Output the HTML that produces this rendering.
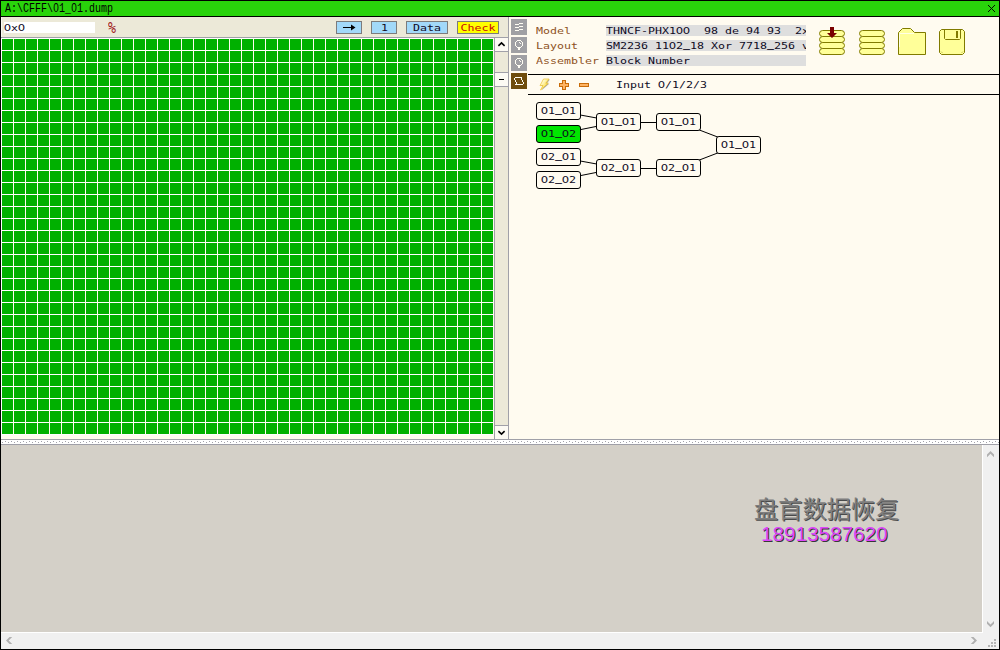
<!DOCTYPE html>
<html><head><meta charset="utf-8"><title>dump</title>
<style>
html,body{margin:0;padding:0;width:1000px;height:650px;overflow:hidden;background:#000;}
#w{position:absolute;left:0;top:0;width:1000px;height:650px;background:#000;overflow:hidden;font-family:"Liberation Mono","DejaVu Sans Mono",monospace;}
#w div,#w svg{position:absolute;}
.m{font-family:"DejaVu Sans Mono","Liberation Mono",monospace;font-size:11.63px;line-height:14px;white-space:pre;color:#0e0a1e;height:14px;transform:scaleY(0.80);transform-origin:0 11px;}
.m i{font-style:normal;display:inline-block;width:7px;text-indent:-0.2px;font-family:"DejaVu Sans","Liberation Sans",sans-serif;}
.g{background:#a0a0a8;}
.btn{border:1px solid #7c7c7c;box-sizing:border-box;height:13px;top:21px;background:#a2d9f9;}
.sb{width:16px;height:16px;left:511px;background:#a0a0a4;}
.fld{left:606px;width:200px;height:11px;background:#dedede;clip-path:inset(-3px 0 -4px 0);}
.n{width:45px;height:18px;box-sizing:border-box;border:1px solid #000;border-radius:3px;background:#fffbf0;}
.n .m{left:4px;top:0;}
#ttl i{font-style:normal;display:inline-block;width:7.2px;text-indent:0.25px;font-family:"Liberation Sans",sans-serif;}
.m b{font-weight:bold;position:relative;top:-1px;}
</style></head><body>
<div id="w">
<!-- title -->
<div style="left:1px;top:1px;width:998px;height:15px;background:#29d30b;"></div>
<div id="ttl" style="left:5px;top:2px;height:13px;font-family:'Liberation Mono',monospace;font-size:12px;line-height:13px;white-space:pre;color:#000;transform-origin:0 50%;transform:scaleX(0.8333);">A:\CFFF\<i>0</i>1_<i>0</i>1.dump</div>
<svg style="left:987px;top:4px" width="9" height="9" viewBox="0 0 9 9"><path d="M1 1L8 8M8 1L1 8" stroke="#000" stroke-width="0.95" fill="none"/></svg>
<!-- left toolbar -->
<div style="left:1px;top:17px;width:507px;height:20px;background:#ece9d8;"></div>
<div style="left:1px;top:17px;width:1px;height:20px;background:#fbfaf4;"></div>
<div style="left:4px;top:22px;width:91px;height:11px;background:#fff;"></div>
<div class="m" style="left:4px;top:20px;"><i>0</i>x<i>0</i></div>
<div class="m" style="left:108px;top:22.4px;color:#a01c1c;font-size:13.3px;transform-origin:0 11.6px;transform:scaleY(1.22);">%</div>
<div class="btn" style="left:336px;width:26px;"></div>
<svg style="left:336px;top:21px" width="26" height="13" viewBox="0 0 26 13"><path d="M7 6.5H18" stroke="#000" stroke-width="1"/><path d="M15 3.5L19.5 6.5L15 9.5Z" fill="#000"/></svg>
<div class="btn" style="left:371px;width:26px;"></div>
<div class="m" style="left:381px;top:20px;">1</div>
<div class="btn" style="left:406px;width:42px;"></div>
<div class="m" style="left:413px;top:20px;">Data</div>
<div class="btn" style="left:457px;width:42px;background:#ffff00;"></div>
<div class="m" style="left:460.5px;top:20px;color:#c80808;">Check</div>
<div class="g" style="left:1px;top:37px;width:508px;height:1px;"></div>
<!-- grid -->
<div style="left:1px;top:38px;width:493px;height:401px;background:#fffbf0;"></div>
<div style="left:1px;top:38px;width:493px;height:397px;background:linear-gradient(90deg,#fffbf0 1px,transparent 1px) 0 0/12px 12px,linear-gradient(180deg,#fff 1px,transparent 1px) 0 0/12px 12px,#00b000;"></div>
<div style="left:1px;top:38px;width:1px;height:401px;background:#fff;"></div>
<!-- v scroll of grid -->
<div style="left:495px;top:38px;width:13px;height:401px;background:#ece9d8;"></div>
<div class="g" style="left:494px;top:37px;width:1px;height:402px;"></div>
<div class="g" style="left:508px;top:17px;width:1px;height:422px;"></div>
<div style="left:495px;top:38px;width:13px;height:13px;background:#fcfaf3;"></div>
<div class="g" style="left:495px;top:51px;width:13px;height:1px;"></div>
<svg style="left:495px;top:38px" width="13" height="13" viewBox="0 0 13 13"><path d="M3.4 7.8L6.5 4.9L9.6 7.8" stroke="#000" stroke-width="1.6" fill="none"/></svg>
<div class="g" style="left:495px;top:72px;width:13px;height:1px;"></div>
<div style="left:495px;top:73px;width:13px;height:13px;background:#fcfaf3;"></div>
<div class="g" style="left:495px;top:86px;width:13px;height:1px;"></div>
<div style="left:499px;top:78.7px;width:5px;height:1.6px;background:#000;"></div>
<div class="g" style="left:495px;top:425px;width:13px;height:1px;"></div>
<div style="left:495px;top:426px;width:13px;height:13px;background:#fcfaf3;"></div>
<svg style="left:495px;top:426px" width="13" height="13" viewBox="0 0 13 13"><path d="M3.4 5.2L6.5 8.1L9.6 5.2" stroke="#000" stroke-width="1.6" fill="none"/></svg>
<!-- right panel -->
<div style="left:509px;top:17px;width:490px;height:422px;background:#fffbf0;"></div>
<div class="sb" style="top:19px;"></div>
<div class="sb" style="top:37px;"></div>
<div class="sb" style="top:55px;"></div>
<div class="sb" style="top:73px;background:#6e4c0c;"></div>
<svg style="left:511px;top:19px" width="16" height="16" viewBox="0 0 16 16" shape-rendering="crispEdges"><path d="M4 5h4v1h-4zM4 8h4v1h-4zM4 11h4v1h-4zM8 4h4v1h-4zM8 7h4v1h-4zM8 10h4v1h-4z" fill="#fffdf4"/></svg>
<svg style="left:511px;top:37px" width="16" height="16" viewBox="0 0 16 16" shape-rendering="crispEdges"><path d="M6 3h4v1h-4zM5 4h1v1h-1zM10 4h1v1h-1zM4 5h1v4h-1zM11 5h1v4h-1zM5 9h1v1h-1zM10 9h1v1h-1zM6 10h4v1h-4zM7 11h2v2h-2zM8 5h1v1h-1zM9 6h1v1h-1z" fill="#fffdf4"/></svg>
<svg style="left:511px;top:55px" width="16" height="16" viewBox="0 0 16 16" shape-rendering="crispEdges"><path d="M6 3h4v1h-4zM5 4h1v1h-1zM10 4h1v1h-1zM4 5h1v4h-1zM11 5h1v4h-1zM5 9h1v1h-1zM10 9h1v1h-1zM6 10h4v1h-4zM7 11h2v2h-2zM8 5h1v1h-1zM9 6h1v1h-1z" fill="#fffdf4"/></svg>
<svg style="left:511px;top:73px" width="16" height="16" viewBox="0 0 16 16" shape-rendering="crispEdges"><path d="M4 4h7v1h-7zM3 5h1v2h-1zM10 5h1v2h-1zM4 7h1v2h-1zM11 7h1v2h-1zM5 9h1v2h-1zM12 9h1v2h-1zM4 11h8v1h-8z" fill="#fffdf4"/></svg>
<div class="m" style="left:536px;top:23px;color:#8e5224;">Model</div>
<div class="m" style="left:536px;top:38px;color:#8e5224;">Layout</div>
<div class="m" style="left:536px;top:53px;color:#8e5224;">Assembler</div>
<div class="fld" style="top:25px;"><div class="m" style="left:0;top:-2px;">THNCF-PHX1<i>0</i><i>0</i>  98 de 94 93  2x</div></div>
<div class="fld" style="top:40px;"><div class="m" style="left:0;top:-2px;">SM2236 11<i>0</i>2<b>_</b>18 Xor 7718<b>_</b>256 v</div></div>
<div class="fld" style="top:55px;"><div class="m" style="left:0;top:-2px;">Block Number</div></div>
<!-- big icons -->
<svg style="left:815px;top:24px" width="36" height="36" viewBox="0 0 36 36"><g fill="#ffff99" stroke="#807a00" stroke-width="1"><rect x="4.5" y="24.5" width="25" height="6" rx="3.2"/><rect x="4.5" y="18.5" width="25" height="6" rx="3.2"/><rect x="4.5" y="12.5" width="25" height="6" rx="3.2"/><rect x="4.5" y="6.5" width="25" height="6" rx="3.2"/></g><path d="M15 3H19V9H22L17 14L12 9H15Z" fill="#7a0000"/></svg>
<svg style="left:855px;top:24px" width="36" height="36" viewBox="0 0 36 36"><g fill="#ffff99" stroke="#807a00" stroke-width="1"><rect x="4.5" y="24.5" width="25" height="6" rx="3.2"/><rect x="4.5" y="18.5" width="25" height="6" rx="3.2"/><rect x="4.5" y="12.5" width="25" height="6" rx="3.2"/><rect x="4.5" y="6.5" width="25" height="6" rx="3.2"/></g></svg>
<svg style="left:895px;top:24px" width="36" height="36" viewBox="0 0 36 36"><path d="M3.5 30.5V8.5L7.5 4.5H15.5L19.5 8.5H30.5V30.5Z" fill="#ffff99" stroke="#807a00" stroke-width="1"/><path d="M4.5 23V9.5H19" stroke="#ffffe6" stroke-width="1" fill="none"/></svg>
<svg style="left:935px;top:24px" width="36" height="36" viewBox="0 0 36 36"><path d="M6.5 5.5H27.5L29.5 7.5V28.5L27.5 30.5H6.5L4.5 28.5V7.5Z" fill="#ffff99" stroke="#807a00" stroke-width="1"/><path d="M9.5 5.5V14.5L10.5 15.5H24.5L25.5 14.5V5.5" fill="none" stroke="#807a00" stroke-width="1"/><rect x="21" y="7" width="2" height="7" fill="#807a00"/><path d="M6 27.5L7.5 29M28 27.5L26.5 29" stroke="#c8c450" stroke-width="1" fill="none"/></svg>
<!-- lines -->
<div style="left:528px;top:74px;width:471px;height:1px;background:#000;"></div>
<div style="left:528px;top:94px;width:471px;height:1px;background:#000;"></div>
<svg style="left:538px;top:77px" width="14" height="15" viewBox="0 0 14 15"><defs><linearGradient id="lg" x1="0" y1="0" x2="1" y2="1"><stop offset="0.25" stop-color="#fffbd2"/><stop offset="0.8" stop-color="#ffd92e"/></linearGradient></defs><path d="M5.5 2L11 2L7.8 6.2L10.3 6.2L2.5 13L5 8.6L2 8.6Z" fill="#8c8c8c" opacity="0.75" transform="translate(0.9,0.5)"/><path d="M5.5 2L11 2L7.8 6.2L10.3 6.2L2.5 13L5 8.6L2 8.6Z" fill="url(#lg)" stroke="#ecc22a" stroke-width="0.7" stroke-linejoin="round"/></svg>
<svg style="left:558px;top:79px" width="12" height="12" viewBox="0 0 12 12" shape-rendering="crispEdges"><path d="M4.5 1.5H7.5V4.5H10.5V7.5H7.5V10.5H4.5V7.5H1.5V4.5H4.5Z" fill="#ffb463" stroke="#c86c0a" stroke-width="1"/></svg>
<svg style="left:578px;top:79px" width="12" height="12" viewBox="0 0 12 12" shape-rendering="crispEdges"><rect x="1.5" y="4.5" width="9" height="3" fill="#ffb463" stroke="#c86c0a" stroke-width="1"/></svg>
<div class="m" style="left:616px;top:77px;">Input <i>0</i>/1/2/3</div>
<!-- tree -->
<svg style="left:509px;top:95px" width="490" height="344" viewBox="509 95 490 344"><g stroke="#000" stroke-width="1" fill="none"><path d="M558.5 111L618.5 122M558.5 134L618.5 122M558.5 157L618.5 168M558.5 180L618.5 168M618.5 122.5H678.5M618.5 168.5H678.5M678.5 122L738.5 145M678.5 168L738.5 145"/></g></svg>
<div class="n" style="left:536px;top:102px;"><div class="m"><i>0</i>1<b>_</b><i>0</i>1</div></div>
<div class="n" style="left:536px;top:125px;background:#00e600;"><div class="m"><i>0</i>1<b>_</b><i>0</i>2</div></div>
<div class="n" style="left:536px;top:148px;"><div class="m"><i>0</i>2<b>_</b><i>0</i>1</div></div>
<div class="n" style="left:536px;top:171px;"><div class="m"><i>0</i>2<b>_</b><i>0</i>2</div></div>
<div class="n" style="left:596px;top:113px;"><div class="m"><i>0</i>1<b>_</b><i>0</i>1</div></div>
<div class="n" style="left:596px;top:159px;"><div class="m"><i>0</i>2<b>_</b><i>0</i>1</div></div>
<div class="n" style="left:656px;top:113px;"><div class="m"><i>0</i>1<b>_</b><i>0</i>1</div></div>
<div class="n" style="left:656px;top:159px;"><div class="m"><i>0</i>2<b>_</b><i>0</i>1</div></div>
<div class="n" style="left:716px;top:136px;"><div class="m"><i>0</i>1<b>_</b><i>0</i>1</div></div>
<!-- splitter -->
<div class="g" style="left:1px;top:439px;width:998px;height:1px;"></div>
<div style="left:1px;top:440px;width:998px;height:4px;background:#fff;"></div>
<div style="left:1px;top:441px;width:998px;height:2px;background:linear-gradient(90deg,#a0a0a8 1px,transparent 1px) 4px 0/6px 1px no-repeat,linear-gradient(90deg,#a0a0a8 1px,transparent 1px) 1px 1px/6px 1px;background-repeat:repeat-x;"></div>
<div class="g" style="left:1px;top:444px;width:998px;height:1px;"></div>
<!-- bottom pane -->
<div style="left:1px;top:445px;width:998px;height:204px;background:#f0f0f0;"></div>
<div style="left:1px;top:445px;width:981px;height:187px;background:#d4d0c8;"></div>
<div style="left:1px;top:632px;width:982px;height:1px;background:#fff;"></div>
<div style="left:982px;top:445px;width:1px;height:188px;background:#fff;"></div>
<svg style="left:0;top:440px" width="1000" height="210" viewBox="0 440 1000 210"><g fill="#b0b0b0"><path d="M987 457.2V454.5L990.5 451L994 454.5V457.2L990.5 453.7Z"/><path d="M987 621V623.7L990.5 627.2L994 623.7V621L990.5 624.5Z"/><path d="M12.2 637H9.5L6 640.5L9.5 644H12.2L8.7 640.5Z"/><path d="M970.8 637H973.5L977 640.5L973.5 644H970.8L974.3 640.5Z"/></g></svg>
<svg style="left:985px;top:636px" width="13" height="13" viewBox="0 0 13 13" fill="#b4b4b4"><rect x="9" y="3" width="2" height="2"/><rect x="6" y="6" width="2" height="2"/><rect x="9" y="6" width="2" height="2"/><rect x="3" y="9" width="2" height="2"/><rect x="6" y="9" width="2" height="2"/><rect x="9" y="9" width="2" height="2"/></svg>
<!-- watermark -->
<div style="left:754px;top:494px;width:146px;height:32px;font-family:'Liberation Sans','Noto Sans CJK SC',sans-serif;font-size:24.2px;line-height:32px;white-space:nowrap;color:#7e7e7e;text-shadow:1px 1px 0 #4a4a4a;font-weight:400;">盘首数据恢复</div>
<div style="left:761px;top:520px;width:130px;height:28px;font-family:'Liberation Sans','Noto Sans CJK SC',sans-serif;font-size:20.7px;line-height:28px;white-space:nowrap;color:#dc46fb;text-shadow:1px 1px 0 #383838;">18913587620</div>
</div>
</body></html>
